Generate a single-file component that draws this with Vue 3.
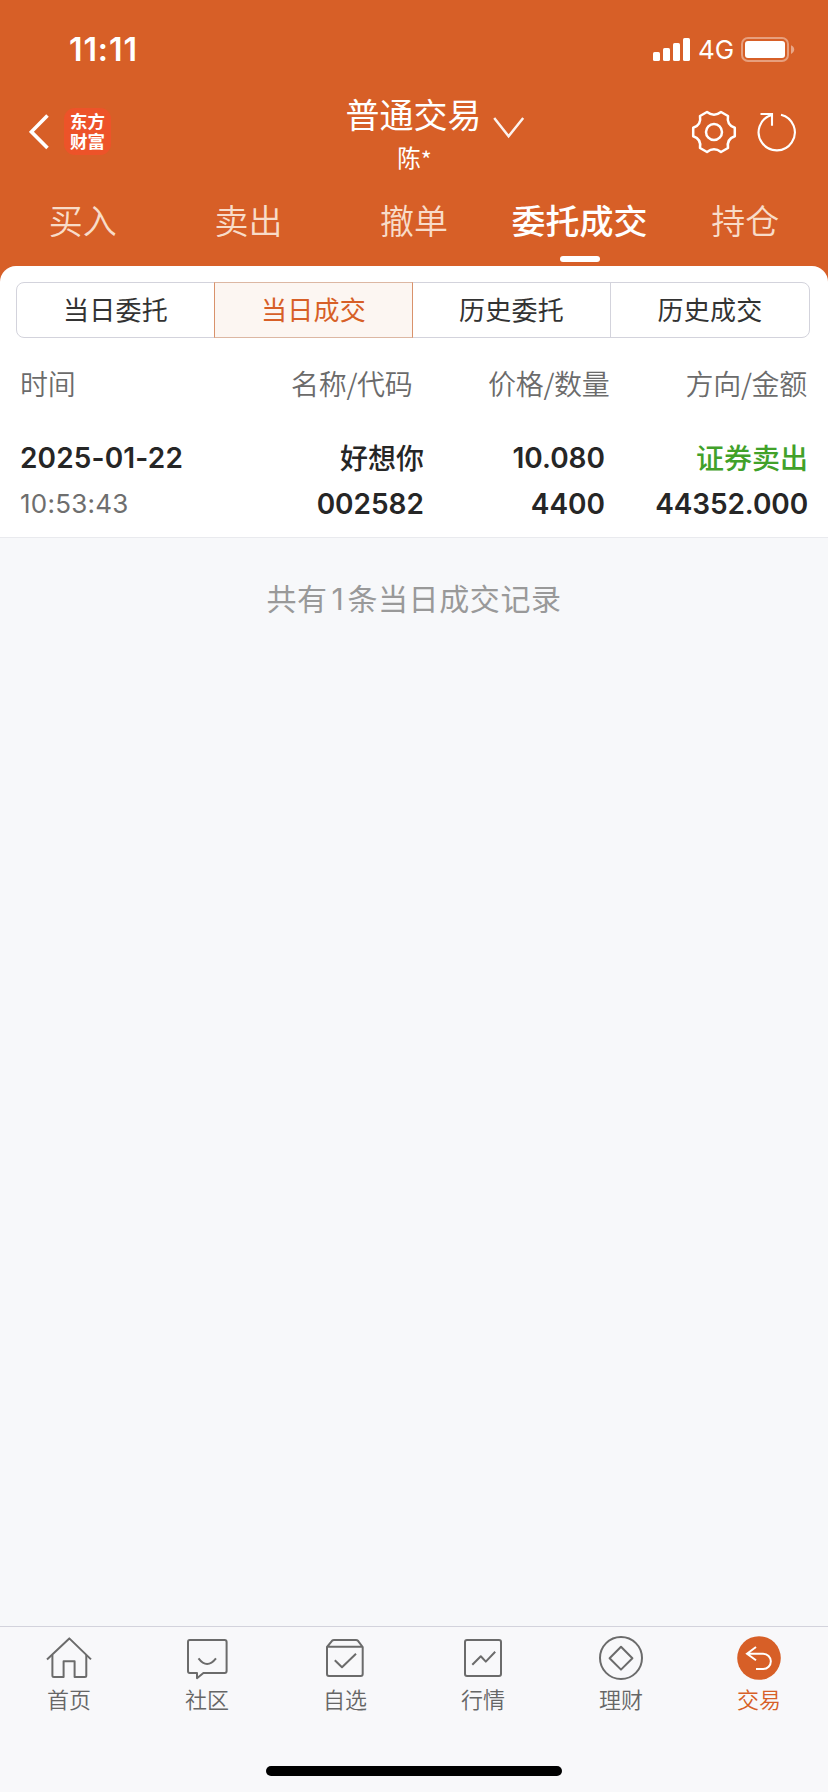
<script setup>
const tabs = ['买入', '卖出', '撤单', '委托成交', '持仓']
const segments = ['当日委托', '当日成交', '历史委托', '历史成交']
const columns = ['时间', '名称/代码', '价格/数量', '方向/金额']
const nav = [
  { id: 'home', label: '首页' },
  { id: 'community', label: '社区' },
  { id: 'watch', label: '自选' },
  { id: 'market', label: '行情' },
  { id: 'wealth', label: '理财' },
  { id: 'trade', label: '交易' },
]
</script>

<template>
  <div class="screen">
    <header class="top">
      <div class="status">
        <span class="clock">11:11</span>
        <div class="indicators">
          <svg class="signal" width="37" height="24" viewBox="0 0 37 24" fill="#fff">
            <rect x="0" y="14" width="7" height="9" rx="1.6" />
            <rect x="10" y="10" width="7" height="13" rx="1.6" />
            <rect x="20" y="5" width="7" height="18" rx="1.6" />
            <rect x="30" y="0" width="7" height="23" rx="1.6" />
          </svg>
          <span class="net">4G</span>
          <svg class="battery" width="54" height="26" viewBox="0 0 54 26">
            <rect x="1" y="1" width="46" height="23" rx="6" fill="none" stroke="#fff" stroke-opacity=".4" stroke-width="2" />
            <rect x="4" y="4" width="40" height="17" rx="3" fill="#fff" />
            <path d="M50 8.3Q53.2 9.8 53.2 12.6T50 17z" fill="#fff" fill-opacity=".45" />
          </svg>
        </div>
      </div>

      <div class="bar">
        <div class="left">
          <svg width="20" height="36" viewBox="0 0 20 36" fill="none" stroke="#fff" stroke-width="3.6">
            <path d="M18.5 1.5L2.4 17.8L18.5 34" />
          </svg>
          <div class="logo">东方<br />财富</div>
        </div>
        <div class="heading">
          <div class="title">普通交易</div>
          <div class="user">陈<span class="mask">*</span></div>
        </div>
        <svg class="drop" width="32" height="22" viewBox="0 0 32 22" fill="none" stroke="#fff" stroke-opacity=".92" stroke-width="2.5">
          <path d="M1.2 1L15.6 19.3L30.2 1" />
        </svg>
        <div class="tools">
          <svg width="46" height="46" viewBox="-23 -23 46 46" fill="none" stroke="#fff" stroke-width="2.5" stroke-linejoin="round">
            <path d="M-7 -20Q0 -14.6 7 -20L14 -16Q12.4 -7 20.8 -4.2V4.2Q12.4 7 14 16L7 20Q0 14.6 -7 20L-14 16Q-12.4 7 -20.8 4.2V-4.2Q-12.4 -7 -14 -16Z" />
            <circle r="8" />
          </svg>
          <svg width="42" height="42" viewBox="-21 -21 42 42" fill="none" stroke="#fff" stroke-width="2.1">
            <path d="M4 -17.3A18.1 18.1 0 1 1 -5.3 -17.1" />
            <path d="M-16.5 -18H-5V-6.3" />
          </svg>
        </div>
      </div>

      <nav class="tabs">
        <div v-for="(t, i) in tabs" :key="t" class="tab" :class="{ on: i === 3 }">{{ t }}</div>
      </nav>
    </header>

    <main class="panel">
      <div class="segments">
        <div v-for="(s, i) in segments" :key="s" class="segment" :class="{ on: i === 1 }">{{ s }}</div>
      </div>
      <div class="columns">
        <span v-for="c in columns" :key="c">{{ c }}</span>
      </div>
      <div class="record">
        <span class="date">2025-01-22</span>
        <span class="cjk">好想你</span>
        <span>10.080</span>
        <span class="cjk sell">证券卖出</span>
        <span class="time">10:53:43</span>
        <span>002582</span>
        <span>4400</span>
        <span class="amount">44352.000</span>
      </div>
    </main>

    <p class="summary">共有<span class="count">1</span>条当日成交记录</p>

    <footer class="bottom">
      <div v-for="n in nav" :key="n.id" class="item" :class="{ on: n.id === 'trade' }">
        <svg width="46" height="46" viewBox="0 0 46 46" fill="none" stroke="#6b6b6b" stroke-width="2" stroke-linejoin="round">
          <template v-if="n.id === 'home'">
            <path d="M1 24.4L23.3 3.4L45 24.4" />
            <path d="M6.4 20V40.5Q6.4 42 7.9 42H17.6V26.2H28.6V42H38.8Q40.3 42 40.3 40.5V20" />
          </template>
          <template v-else-if="n.id === 'community'">
            <path d="M5.7 5H40.6Q42.6 5 42.6 7V36Q42.6 38 40.6 38H19.4L13 43.2V38H5.7Q4 38 4 36V7Q4 5 5.7 5Z" />
            <path d="M14.5 23.3Q23 34.5 32 23.3" />
          </template>
          <template v-else-if="n.id === 'watch'">
            <path d="M5 12L10 5.8Q10.8 5 12 5H34Q35.2 5 36 5.8L40.7 12V39Q40.7 41 38.7 41H7Q5 41 5 39ZM5 11.8H40.7" />
            <path d="M12.8 25.3L20 32.3L34 18.7" />
          </template>
          <template v-else-if="n.id === 'market'">
            <rect x="5" y="5" width="36" height="36" rx="2" />
            <path d="M12.3 29.8L20.8 21.3L25.8 26.6L35.2 16.8" />
          </template>
          <template v-else-if="n.id === 'wealth'">
            <circle cx="23" cy="23" r="21" />
            <path d="M23 11.8L34.4 23.2L23 34.6L11.6 23.2Z" />
          </template>
          <template v-else>
            <circle cx="23" cy="23" r="21.8" fill="#d75f27" stroke="none" />
            <path d="M20 12L11 18.7L20 25.3M11 18.7H27.2A7.6 7.6 0 0 1 27.2 34H20" stroke="#fff" stroke-linejoin="miter" />
          </template>
        </svg>
        <span>{{ n.label }}</span>
      </div>
      <div class="grip"></div>
    </footer>
  </div>
</template>

<style>
body {
  background: #f7f8fa;
}
</style>

<style scoped>
.screen {
  width: 828px;
  height: 1792px;
  display: flex;
  flex-direction: column;
  overflow: hidden;
  background: #f7f8fa;
  font-family: Inter, "Noto Sans CJK SC", sans-serif;
}
.top {
  height: 286px;
  box-sizing: border-box;
  flex: none;
  background: #d75f27;
  color: #fff;
}
.status {
  height: 90px;
  display: flex;
  justify-content: space-between;
  box-sizing: border-box;
  padding: 30px 33px 0 69px;
}
.clock {
  font-size: 32px;
  font-weight: 600;
  line-height: 40px;
  letter-spacing: 0.9px;
}
.indicators {
  display: flex;
  align-items: flex-start;
}
.signal {
  margin-top: 8px;
}
.net {
  width: 51px;
  box-sizing: border-box;
  padding-left: 8px;
  font-size: 26px;
  line-height: 40px;
}
.battery {
  margin-top: 7px;
}
.bar {
  height: 96px;
  position: relative;
  display: flex;
  justify-content: space-between;
  padding: 0 30px 0 29px;
}
.left {
  display: flex;
  align-items: flex-start;
  gap: 15px;
  padding-top: 18px;
}
.left > svg {
  margin-top: 6px;
}
.logo {
  width: 47px;
  height: 47px;
  box-sizing: border-box;
  padding-top: 3px;
  border-radius: 11px;
  background: #ed5329;
  text-align: center;
  font-family: "Noto Sans CJK SC", sans-serif;
  font-size: 17.5px;
  font-weight: 700;
  line-height: 20px;
}
.heading {
  position: absolute;
  left: 263.5px;
  width: 300px;
  text-align: center;
  font-family: "Noto Sans CJK SC", sans-serif;
}
.title {
  font-size: 34px;
  line-height: 48px;
}
.user {
  font-size: 23.5px;
  line-height: 32px;
  margin: 3px 0 0 2px;
}
.mask {
  position: relative;
  top: 2px;
}
.drop {
  position: absolute;
  left: 493px;
  top: 27px;
}
.tools {
  display: flex;
  align-items: flex-start;
  gap: 19px;
  padding-top: 19px;
}
.tools > svg:last-child {
  margin-top: 2px;
}
.tabs {
  display: grid;
  grid-template-columns: repeat(5, 1fr);
  font-family: "Noto Sans CJK SC", sans-serif;
  font-size: 34px;
  line-height: 68px;
  text-align: center;
}
.tab {
  color: #f8dcc9;
  font-weight: 350;
}
.tab.on {
  color: #fff;
  font-weight: 500;
}
.tab.on::after {
  content: "";
  display: block;
  width: 40px;
  height: 6px;
  margin: 2px auto 0;
  border-radius: 3px;
  background: #fff;
}
.panel {
  flex: none;
  height: 272px;
  margin-top: -20px;
  box-sizing: border-box;
  padding-top: 16px;
  border-radius: 16px 16px 0 0;
  border-bottom: 1px solid #e9eaee;
  background: #fff;
}
.segments {
  display: grid;
  grid-template-columns: repeat(4, 1fr);
  width: 794px;
  height: 56px;
  margin-left: 16px;
  box-sizing: border-box;
  border: 1px solid #d3d3dc;
  border-radius: 8px;
}
.segment {
  font-family: "Noto Sans CJK SC", sans-serif;
  font-size: 26px;
  line-height: 52px;
  letter-spacing: 0.2px;
  text-align: center;
  color: #333;
  border-right: 1px solid #d3d3dc;
}
.segment:last-child {
  border-right: none;
}
.segment.on {
  margin: -1px 0 -1px -1px;
  border: 1px solid;
  border-color: #dcb7a3 #d9926b;
  background: #fcf6f2;
  color: #d75f27;
}
.columns {
  display: grid;
  grid-template-columns: 180px 212.5px 197px 197.5px;
  margin-left: 20px;
  margin-top: 25px;
  font-size: 28px;
  line-height: 40px;
  letter-spacing: -0.3px;
  color: #6b6b6b;
  font-weight: 350;
  font-family: "Noto Sans CJK SC", sans-serif;
}
.columns span + span,
.record span {
  text-align: right;
}
.record {
  display: grid;
  grid-template-columns: 200px 204px 181px 203px;
  grid-auto-rows: 46px;
  margin: 32px 0 0 20px;
  font-size: 28px;
  font-weight: 600;
  line-height: 46px;
  color: #262626;
}
.record .date,
.record .time {
  text-align: left;
  letter-spacing: 0.15px;
}
.record .time {
  font-size: 26px;
  font-weight: 400;
  color: #6e6e6e;
  letter-spacing: 0.25px;
}
.record .amount {
  letter-spacing: -0.1px;
}
.record .cjk {
  font-family: "Noto Sans CJK SC", sans-serif;
  font-weight: 500;
  line-height: 44px;
}
.record .sell {
  color: #41a12a;
}
.summary {
  margin: 37px 0 0;
  text-align: center;
  font-family: "Noto Sans CJK SC", sans-serif;
  font-size: 30px;
  line-height: 44px;
  letter-spacing: 0.6px;
  color: #999;
}
.count {
  margin: 0 3px 0 4px;
  font-family: Inter, sans-serif;
}
.bottom {
  position: relative;
  height: 166px;
  margin-top: auto;
  box-sizing: border-box;
  padding-top: 8px;
  border-top: 1px solid #d3d3dc;
  background: #f8f8fa;
  display: grid;
  grid-template-columns: repeat(6, 1fr);
}
.item {
  display: flex;
  flex-direction: column;
  align-items: center;
  font-family: "Noto Sans CJK SC", sans-serif;
  font-size: 22px;
  font-weight: 350;
  line-height: 32px;
  color: #666;
}
.item span {
  margin-top: 1px;
}
.item.on {
  color: #d75f27;
}
.grip {
  position: absolute;
  left: 266px;
  bottom: 16px;
  width: 296px;
  height: 10px;
  border-radius: 5px;
  background: #000;
}
</style>
